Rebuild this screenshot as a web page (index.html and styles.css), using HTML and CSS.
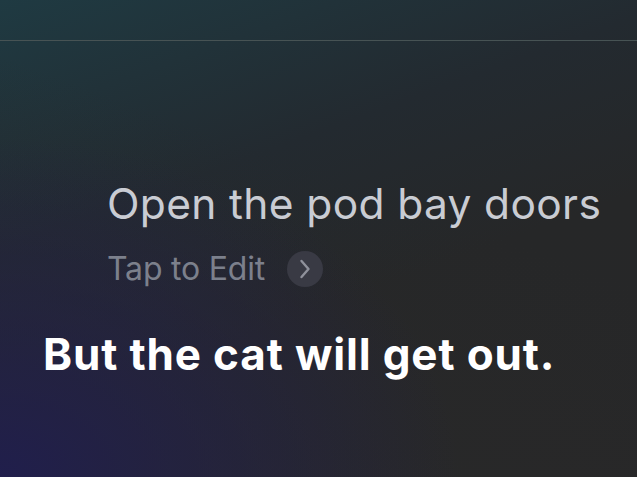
FILE: index.html
```html
<!DOCTYPE html>
<html lang="en">
<head>
  <meta charset="UTF-8" />
  <meta name="viewport" content="width=device-width, initial-scale=1.0" />
  <title>Siri</title>
  <link rel="stylesheet" href="styles.css">
</head>
<body>
  <div class="screen">
    <div class="top-bar"></div>
    <div class="request">
      <div class="query">Open the pod bay doors</div>
      <div class="edit">
        <span>Tap to Edit</span>
        <span class="chevron">
          <svg width="12" height="20" viewBox="0 0 12 20">
            <path d="M2.5 2 L9.5 10 L2.5 18" fill="none" stroke="#8f919b" stroke-width="2.4" stroke-linecap="round" stroke-linejoin="round"/>
          </svg>
        </span>
      </div>
    </div>
    <div class="answer">But the cat will get out.</div>
  </div>
</body>
</html>
```

FILE: styles.css
```css
* {
  box-sizing: border-box;
}
body {
  margin: 0;
  font-family: Inter, "Noto Sans", sans-serif;
}
.screen {
  width: 637px;
  height: 477px;
  overflow: hidden;
  background:
    linear-gradient(200deg, rgba(40,40,40,0) 40%, rgba(42,42,42,0.6) 100%),
    linear-gradient(160deg, #1f3a42 0%, #232a30 35%, #262728 60%, #272728 100%);
  position: relative;
  display: flex;
  flex-direction: column;
}
.screen::before {
  content: "";
  position: absolute;
  inset: 0;
  background: radial-gradient(ellipse 460px 340px at 0% 100%, rgba(32,30,78,0.95), rgba(32,30,78,0) 100%);
}
.top-bar {
  height: 41px;
  border-bottom: 1px solid #475354;
  position: relative;
}
.request {
  padding: 139px 0 0 107px;
  position: relative;
}
.query {
  font-size: 42.5px;
  font-weight: 400;
  color: #c9ccd3;
  letter-spacing: 0.35px;
  line-height: 48px;
}
.edit {
  display: flex;
  align-items: center;
  gap: 22px;
  margin-top: 22px;
  font-size: 32px;
  color: #7c808c;
  letter-spacing: -0.2px;
  line-height: 38px;
}
.chevron {
  width: 36px;
  height: 36px;
  border-radius: 50%;
  background: #393a44;
  display: flex;
  align-items: center;
  justify-content: center;
}
.answer {
  position: relative;
  padding: 39px 0 0 43px;
  font-size: 44px;
  font-weight: 700;
  color: #ffffff;
  line-height: 54px;
  letter-spacing: 0.85px;
}
```
